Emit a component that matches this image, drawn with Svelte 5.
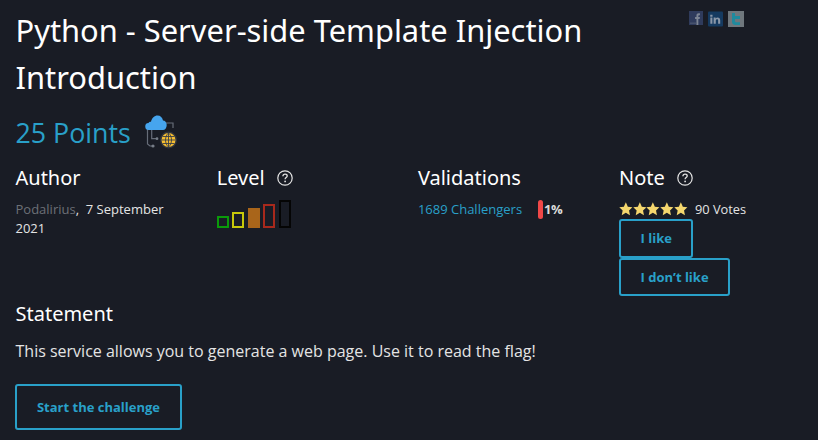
<script>
	const columns = [
		{ title: 'Author' },
		{ title: 'Level', help: true },
		{ title: 'Validations' },
		{ title: 'Note', help: true }
	];
	const bars = [
		{ h: 12, color: '#0a9a0a' },
		{ h: 16, color: '#c8c80a' },
		{ h: 20, color: '#a9651a', filled: true },
		{ h: 24, color: '#a8291c' },
		{ h: 28, color: '#050505' }
	];
</script>

{#snippet help()}
	<svg class="help" width="16" height="16" viewBox="0 0 16 16" fill="none">
		<circle cx="8" cy="8" r="7.2" stroke="#e4e4e4" stroke-width="1.2" />
		<path d="M5.9 6.2c.1-1.3 1-2 2.2-2 1.2 0 2.1.8 2.1 1.8 0 1.5-2.1 1.600-2.100 3.200" stroke="#e4e4e4" stroke-width="1.3" />
		<circle cx="8.100" cy="11.400" r=".9" fill="#e4e4e4" />
	</svg>
{/snippet}

{#snippet star()}
	<svg width="13.700" height="14" viewBox="0 0 24 24" preserveAspectRatio="none"><path d="M12 .5l3.500 7.500 8 1-5.900 5.500 1.600 8L12 18.600l-7.200 3.900 1.600-8L.5 9l8-1z" fill="#f5d76e" /></svg>
{/snippet}

<main class="page">
	<header class="head">
		<h1>Python - Server-side Template Injection Introduction</h1>
		<div class="social">
			<svg width="14" height="14" viewBox="0 0 15 15">
				<rect width="15" height="15" fill="#2f3b5c" />
				<path d="M8 15V8.500H6.500V6.300H8V5c0-1.800 1-2.600 2.400-2.600h1.300v2.200h-.9c-.6 0-.8.300-.8.800v.9h1.700l-.3 2.200H10V15z" fill="#7d8594" />
				<rect x="1" y="12.500" width="7" height="1" fill="#566078" />
			</svg>
			<svg width="15" height="16" viewBox="0 0 16 16">
				<rect width="16" height="16" rx="1" fill="#153a60" />
				<path d="M2.500 6.500h2.200V13H2.500zM2.400 3.500h2.400v2H2.400zM6 6.500h2.100v1c.5-.8 1.200-1.200 2.200-1.200 1.700 0 2.700 1 2.700 3V13h-2.200V9.700c0-.9-.4-1.400-1.100-1.400-.8 0-1.400.6-1.400 1.500V13H6z" fill="#8a97a8" />
			</svg>
			<svg width="16" height="16" viewBox="0 0 16 16">
				<rect width="16" height="16" fill="#6f777d" />
				<path d="M4 2h3v3h5v3H7v2c0 1 .5 1.300 1.500 1.300H12V14H7.500C5 14 4 12.800 4 10.500z" fill="#1f8a9e" />
			</svg>
		</div>
	</header>

	<div class="points">
		<span>25 Points</span>
		<svg width="33" height="34" viewBox="0 0 33 34" fill="none">
			<path d="M2.500 14v15L5 31h2.700M6.700 14v9.700h5M21 8h7v5" stroke="#666c78" stroke-width="1.200" />
			<circle cx="8" cy="31" r="1.600" fill="#777d88" />
			<circle cx="12" cy="23.700" r="1.400" fill="#777d88" />
			<path d="M4 15a3.500 3.500 0 0 1-.5-7C4 7 5 6.500 6 6.700 6.800 3 9.500 .5 12.500 .5c3 0 5 2 5.500 5 2 0 3.700 1.800 3.700 4.500 0 3-1.700 5-3.700 5z" fill="#46a5ee" />
			<circle cx="23.500" cy="25" r="8.500" fill="#30343d" />
			<circle cx="23.500" cy="25" r="7" fill="#f5bd30" />
			<path d="M16.500 25h14M17.500 21.500h12M17.500 28.500h12M23.500 18v14M23.500 18c-4 3.500-4 10.500 0 14M23.500 18c4 3.500 4 10.500 0 14" stroke="#3a3f48" stroke-width=".9" />
		</svg>
	</div>

	<section class="columns">
		<div class="col">
			<h2>{columns[0].title}</h2>
			<p class="meta"><span class="author">Podalirius</span>,&nbsp; 7 September 2021</p>
		</div>
		<div class="col">
			<h2>{columns[1].title} {@render help()}</h2>
			<div class="bars">
				{#each bars as bar}
					<span class="bar" style="height:{bar.h}px;border-color:{bar.color};background:{bar.filled ? bar.color : 'none'}"></span>
				{/each}
			</div>
		</div>
		<div class="col">
			<h2>{columns[2].title}</h2>
			<div class="valid">
				<span class="link">1689 Challengers</span>
				<span class="pct-bar"></span>
				<b>1%</b>
			</div>
		</div>
		<div class="col">
			<h2>{columns[3].title} {@render help()}</h2>
			<div class="votes">
				<span class="stars">{@render star()}{@render star()}{@render star()}{@render star()}{@render star()}</span>
				<span>90 Votes</span>
			</div>
			<div class="note-btns">
				<button class="btn small">I like</button>
				<button class="btn small">I don’t like</button>
			</div>
		</div>
	</section>

	<section class="statement">
		<h2>Statement</h2>
		<p>This service allows you to generate a web page. Use it to read the flag!</p>
		<button class="btn start">Start the challenge</button>
	</section>
</main>

<style>
	:global(body) {
		margin: 0;
		background: #191c25;
		font-family: 'Open Sans', sans-serif;
		color: #e4e4e4;
	}

	.page {
		padding: 0 16px 0 15.5px;
		height: 440px;
		box-sizing: border-box;
		overflow: hidden;
	}

	.head {
		display: flex;
		justify-content: space-between;
		align-items: flex-start;
		padding-right: 58px;
	}

	h1 {
		width: 600px;
		margin: 7px 0 0;
		font: 400 30.85px/47px 'Noto Sans', sans-serif;
		color: #fff;
	}

	.social {
		display: flex;
		align-items: flex-start;
		gap: 5px;
		margin-top: 11px;
	}

	.points {
		display: flex;
		align-items: center;
		gap: 14px;
		margin-top: 13px;
		height: 36px;
		font-size: 26.8px;
		color: #29a0c9;
	}

	.columns {
		display: grid;
		grid-template-columns: repeat(4, 201.2px);
		margin-top: 14px;
	}

	h2 {
		display: flex;
		align-items: center;
		gap: 12px;
		margin: 0;
		font: 400 20px/27px 'Noto Sans', sans-serif;
		color: #fff;
	}

	.meta {
		width: 170px;
		margin: 9px 0 0;
		font-size: 13px;
		line-height: 19px;
	}

	.author {
		color: #6d7077;
	}

	.bars {
		display: flex;
		align-items: flex-end;
		gap: 3.5px;
		height: 28px;
		margin-top: 9px;
	}

	.bar {
		width: 12px;
		box-sizing: border-box;
		border: 2px solid;
	}

	.valid {
		display: flex;
		align-items: center;
		margin-top: 8px;
		height: 20px;
		font-size: 13px;
	}

	.link {
		color: #29a0c9;
	}

	.pct-bar {
		width: 5px;
		height: 19px;
		margin-left: 16px;
		border-radius: 3px;
		background: #f04848;
	}

	.valid b {
		margin-left: 1px;
		letter-spacing: -0.5px;
		color: #dcdcdc;
	}

	.votes {
		display: flex;
		align-items: center;
		gap: 7.5px;
		margin-top: 8px;
		height: 20px;
		font-size: 12.8px;
	}

	.stars {
		display: flex;
		line-height: 0;
	}

	.note-btns {
		display: flex;
		flex-direction: column;
		align-items: flex-start;
		margin-top: 0;
	}

	.btn {
		box-sizing: border-box;
		border: 2px solid #29a0c9;
		border-radius: 3px;
		background: none;
		color: #29a0c9;
		font: 700 13px 'Open Sans', sans-serif;
	}

	.btn.small {
		height: 38.5px;
		padding: 0 19.5px;
	}

	.statement {
		margin-top: 4px;
	}

	.statement p {
		margin: 12px 0 0;
		font-size: 16px;
		line-height: 24px;
	}

	.start {
		width: 167px;
		height: 46px;
		margin-top: 21px;
		margin-left: -0.5px;
	}
</style>
